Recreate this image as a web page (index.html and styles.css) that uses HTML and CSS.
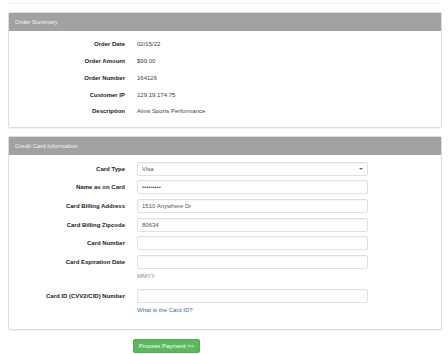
FILE: index.html
```html
<!DOCTYPE html>
<html lang="en">
<head>
  <meta charset="UTF-8">
  <title>Payment</title>
  <link rel="stylesheet" href="styles.css">
</head>
<body>
  <div class="topline"></div>

  <div class="panel summary">
    <div class="panel-heading">Order Summary</div>
    <div class="panel-body">
      <div class="row"><span class="lbl">Order Date</span><span class="val">02/15/22</span></div>
      <div class="row"><span class="lbl">Order Amount</span><span class="val">$99.00</span></div>
      <div class="row"><span class="lbl">Order Number</span><span class="val">164126</span></div>
      <div class="row"><span class="lbl">Customer IP</span><span class="val">129.19.174.75</span></div>
      <div class="row"><span class="lbl">Description</span><span class="val">Aims Sports Performance</span></div>
    </div>
  </div>

  <form class="panel card">
    <div class="panel-heading">Credit Card Information</div>
    <div class="panel-body">
      <div class="field">
        <label class="lbl">Card Type</label>
        <div class="control select">Visa<span class="caret"></span></div>
      </div>
      <div class="field">
        <label class="lbl">Name as on Card</label>
        <div class="control">&#8226;&#8226;&#8226;&#8226;&#8226;&#8226;&#8226;&#8226;&#8226;</div>
      </div>
      <div class="field">
        <label class="lbl">Card Billing Address</label>
        <div class="control">1510 Anywhere Dr</div>
      </div>
      <div class="field">
        <label class="lbl">Card Billing Zipcode</label>
        <div class="control">80634</div>
      </div>
      <div class="field">
        <label class="lbl">Card Number</label>
        <div class="control"></div>
      </div>
      <div class="field has-help">
        <label class="lbl">Card Expiration Date</label>
        <div class="control"></div>
        <span class="help muted">MMYY</span>
      </div>
      <div class="field has-help">
        <label class="lbl">Card ID (CVV2/CID) Number</label>
        <div class="control"></div>
        <span class="help link">What is the Card ID?</span>
      </div>
    </div>
  </form>

  <div class="actions">
    <button class="btn-pay" type="button">Process Payment &gt;&gt;</button>
  </div>
</body>
</html>
```

FILE: styles.css
```css
body {
  margin: 0;
  font-family: "Liberation Sans", Arial, sans-serif;
  font-size: 6px;
  color: #333;
  background: #fff;
}

.topline {
  height: 3px;
  border-bottom: 1px solid #f2f2f2;
  margin: 0 8px;
}

.panel {
  margin: 8px 6px 0 8px;
  border: 1px solid #dcdcdc;
  border-radius: 2px;
  box-shadow: 0 1px 1px rgba(0, 0, 0, 0.06);
  background: #fff;
}

.panel-heading {
  height: 18px;
  line-height: 18px;
  padding: 0 6px;
  background: #a2a2a2;
  color: #f4f4f4;
}

.summary .panel-body {
  padding: 5px 0 7px;
}

.row {
  display: grid;
  grid-template-columns: 116px 1fr;
  column-gap: 12px;
  height: 16.75px;
  align-items: center;
}

.lbl {
  text-align: right;
  font-weight: bold;
  color: #222;
}

.val {
  color: #444;
}

.card {
  margin-top: 8px;
}

.card .panel-body {
  padding: 7px 0 6px;
}

.field {
  display: grid;
  grid-template-columns: 116px 231px;
  column-gap: 12px;
  align-items: center;
  margin-bottom: 4.6px;
}

.field.has-help {
  margin-bottom: 9px;
}

.control {
  grid-column: 2;
  height: 12px;
  line-height: 12px;
  border: 1px solid #e0e0e0;
  border-radius: 2px;
  padding: 0 4px;
  color: #555;
  box-shadow: inset 0 1px 1px rgba(0, 0, 0, 0.03);
  position: relative;
}

.select .caret {
  position: absolute;
  right: 4px;
  top: 5px;
  border-left: 2px solid transparent;
  border-right: 2px solid transparent;
  border-top: 2px solid #666;
}

.help {
  grid-column: 2;
  padding-top: 3px;
  height: 8px;
  line-height: 8px;
}

.muted {
  color: #888;
}

.link {
  color: #3a70a8;
}

.actions {
  padding: 9px 0 0 133px;
}

.btn-pay {
  width: 67px;
  height: 14px;
  padding: 0;
  border: 1px solid #4cae4c;
  border-radius: 2px;
  background: #5cb85c;
  color: #fff;
  font-family: inherit;
  font-size: 6px;
}
```
